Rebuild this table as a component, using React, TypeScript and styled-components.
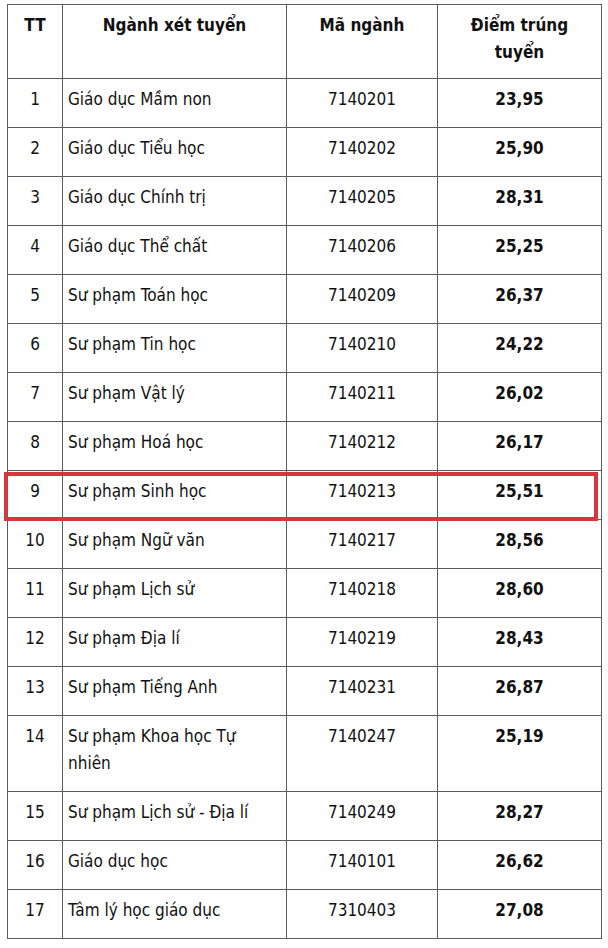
import React from "react";
import styled, { createGlobalStyle } from "styled-components";

const GlobalStyle = createGlobalStyle`
  body {
    margin: 0;
    background: #ffffff;
    font-family: "DejaVu Sans Condensed", "DejaVu Sans", sans-serif;
    color: #111;
  }
`;

const Page = styled.div`
  padding: 4px 0 0 7px;
`;

const Frame = styled.div`
  position: relative;
  width: 594px;
`;

const Table = styled.table`
  width: 594px;
  border-collapse: collapse;
  table-layout: fixed;
  font-size: 17px;
  line-height: 27px;
`;

const Col = styled.col<{ $w: number }>`
  width: ${p => p.$w}px;
`;

const Th = styled.th`
  border: 1px solid #5c5c5c;
  padding: 7px 12px 12px;
  font-weight: bold;
  text-align: center;
  vertical-align: top;
`;

const Td = styled.td<{ $align?: string; $bold?: boolean }>`
  border: 1px solid #5c5c5c;
  padding: 7px 5px 14px;
  text-align: ${p => p.$align || "center"};
  font-weight: ${p => (p.$bold ? "bold" : "normal")};
  vertical-align: top;
`;

const Highlight = styled.div`
  position: absolute;
  box-sizing: border-box;
  left: -3px;
  right: 3px;
  top: 468px;
  height: 49px;
  border: 4px solid #d6373a;
  pointer-events: none;
`;

const rows = [
  ["1", "Giáo dục Mầm non", "7140201", "23,95"],
  ["2", "Giáo dục Tiểu học", "7140202", "25,90"],
  ["3", "Giáo dục Chính trị", "7140205", "28,31"],
  ["4", "Giáo dục Thể chất", "7140206", "25,25"],
  ["5", "Sư phạm Toán học", "7140209", "26,37"],
  ["6", "Sư phạm Tin học", "7140210", "24,22"],
  ["7", "Sư phạm Vật lý", "7140211", "26,02"],
  ["8", "Sư phạm Hoá học", "7140212", "26,17"],
  ["9", "Sư phạm Sinh học", "7140213", "25,51"],
  ["10", "Sư phạm Ngữ văn", "7140217", "28,56"],
  ["11", "Sư phạm Lịch sử", "7140218", "28,60"],
  ["12", "Sư phạm Địa lí", "7140219", "28,43"],
  ["13", "Sư phạm Tiếng Anh", "7140231", "26,87"],
  ["14", "Sư phạm Khoa học Tự nhiên", "7140247", "25,19"],
  ["15", "Sư phạm Lịch sử - Địa lí", "7140249", "28,27"],
  ["16", "Giáo dục học", "7140101", "26,62"],
  ["17", "Tâm lý học giáo dục", "7310403", "27,08"],
];

export default function App() {
  return (
    <Page>
      <GlobalStyle />
      <Frame>
        <Table>
          <colgroup>
            <Col $w={55} />
            <Col $w={224} />
            <Col $w={151} />
            <Col $w={164} />
          </colgroup>
          <thead>
            <tr>
              <Th>TT</Th>
              <Th>Ngành xét tuyển</Th>
              <Th>Mã ngành</Th>
              <Th>Điểm trúng tuyển</Th>
            </tr>
          </thead>
          <tbody>
            {rows.map(r => (
              <tr key={r[0]}>
                <Td>{r[0]}</Td>
                <Td $align="left">{r[1]}</Td>
                <Td>{r[2]}</Td>
                <Td $bold>{r[3]}</Td>
              </tr>
            ))}
          </tbody>
        </Table>
        <Highlight />
      </Frame>
    </Page>
  );
}
